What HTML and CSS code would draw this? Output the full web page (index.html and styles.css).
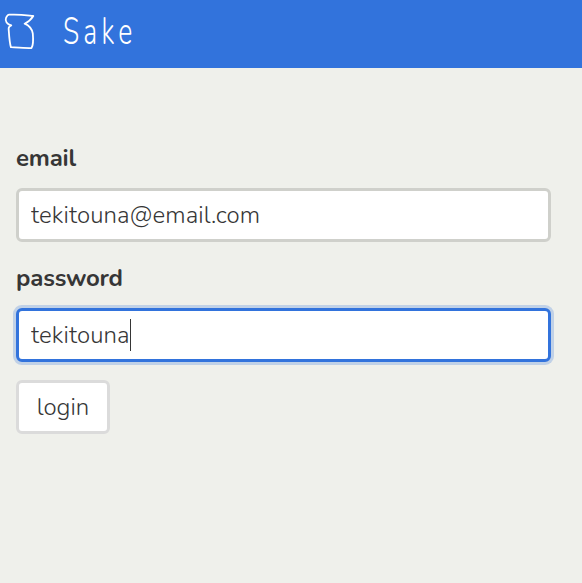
FILE: index.html
```html
<!DOCTYPE html>
<html lang="ja">
<head>
    <meta charset="UTF-8">
    <meta name="viewport" content="width=device-width, initial-scale=1.0">
    <title>Sake</title>
    <link rel="stylesheet" href="styles.css">
</head>
<body>
    <nav class="navbar">
        <svg class="logo" viewBox="0 0 32 38" width="32" height="38">
            <path d="M29.3 4 C22 3.2 15 2 5 2.7 C3 2.9 3 4.5 2 6 C.8 9 3 12.5 7.3 13.4 C4.4 14.8 4.4 16.2 4.8 19 C5.2 25 5.6 31 6.9 35.2 C13 35.4 21 36 27.5 36.1 C29.6 33 29.2 26 28.8 21.5 C28 17 25.6 13.8 20.6 11.7 C24.5 9.8 27.5 7 29.3 4 Z"/>
        </svg>
        <span class="brand">Sake</span>
    </nav>

    <form class="login-form">
        <div class="field">
            <label for="email">email</label>
            <div class="control">
                <input class="input" type="text" id="email" value="tekitouna@email.com">
            </div>
        </div>
        <div class="field">
            <label for="password">password</label>
            <div class="control">
                <input class="input is-focused" type="text" id="password" value="tekitouna">
                <span class="caret"></span>
            </div>
        </div>
        <button class="button" type="button">login</button>
    </form>
</body>
</html>
```

FILE: styles.css
```css
* {
    margin: 0;
    padding: 0;
    box-sizing: border-box;
}

body {
    min-height: 100vh;
    background: #eff0eb;
    color: #363636;
    font-family: Nunito, Lato, sans-serif;
    font-size: 24px;
    line-height: 36px;
    overflow: hidden;
}

.navbar {
    display: flex;
    height: 68px;
    padding: 12px 0 0 4px;
    background: #3273dc;
}

.logo {
    fill: none;
    stroke: #fff;
    stroke-width: 1.8;
    stroke-linecap: round;
    stroke-linejoin: round;
}

.brand {
    margin: 1px 0 0 27px;
    color: #fff;
    font-size: 38px;
    font-weight: 350;
    line-height: 37px;
    letter-spacing: 6px;
    transform: scaleX(.7);
    transform-origin: left;
}

.login-form {
    padding: 72px 31px 0 16px;
}

.field {
    margin-bottom: 18px;
}

label {
    display: block;
    margin-bottom: 12px;
    font-weight: 700;
    letter-spacing: -.2px;
}

.control {
    position: relative;
}

.input {
    display: block;
    width: 100%;
    height: 54px;
    padding: 0 12px;
    border: 3px solid #cfd0cb;
    border-radius: 6px;
    outline: none;
    background: #fff;
    color: #363636;
    font-family: inherit;
    font-size: 24px;
    font-weight: 350;
    letter-spacing: .1px;
}

.is-focused {
    border-color: #3273dc;
    box-shadow: 0 0 0 3px rgba(50, 115, 220, .25);
}

.caret {
    position: absolute;
    top: 11px;
    left: 114px;
    width: 1px;
    height: 32px;
    background: #363636;
}

.button {
    display: block;
    width: 94px;
    height: 54px;
    border: 3px solid #dbdbdb;
    border-radius: 6px;
    background: #fff;
    color: #363636;
    font-family: inherit;
    font-size: 24px;
    font-weight: 350;
}
```
